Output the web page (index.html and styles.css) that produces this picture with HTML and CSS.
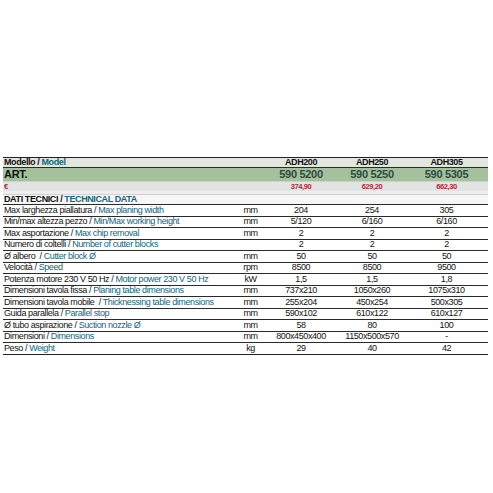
FILE: index.html
```html
<!DOCTYPE html>
<html lang="it">
	<head>
		<meta charset="UTF-8" />
		<meta name="viewport" content="width=device-width, initial-scale=1.0" />
		<title>Pialla ADH - Dati tecnici</title>
		<link rel="stylesheet" href="styles.css">
	</head>
	<body>
		<div class="sheet">
			<table class="specs">
				<colgroup>
					<col class="c-label">
					<col class="c-unit">
					<col class="c-m1">
					<col class="c-m2">
					<col class="c-m3">
				</colgroup>
				<tr class="model">
					<td>Modello / <span class="en">Model</span></td>
					<td></td>
					<td>ADH200</td>
					<td>ADH250</td>
					<td>ADH305</td>
				</tr>
				<tr class="art">
					<td>ART.</td>
					<td></td>
					<td>590 5200</td>
					<td>590 5250</td>
					<td>590 5305</td>
				</tr>
				<tr class="price">
					<td>€</td>
					<td></td>
					<td>374,90</td>
					<td>629,20</td>
					<td>662,30</td>
				</tr>
				<tr class="spacer"><td colspan="5"></td></tr>
				<tr class="section">
					<td colspan="5">DATI TECNICI / <span class="en">TECHNICAL DATA</span></td>
				</tr>
				<tr>
					<td>Max larghezza piallatura / <span class="en">Max planing width</span></td>
					<td>mm</td><td>204</td><td>254</td><td>305</td>
				</tr>
				<tr>
					<td>Min/max altezza pezzo / <span class="en">Min/Max working height</span></td>
					<td>mm</td><td>5/120</td><td>6/160</td><td>6/160</td>
				</tr>
				<tr>
					<td>Max asportazione / <span class="en">Max chip removal</span></td>
					<td>mm</td><td>2</td><td>2</td><td>2</td>
				</tr>
				<tr>
					<td>Numero di coltelli / <span class="en">Number of cutter blocks</span></td>
					<td></td><td>2</td><td>2</td><td>2</td>
				</tr>
				<tr>
					<td>Ø albero &nbsp;/ <span class="en">Cutter block Ø</span></td>
					<td>mm</td><td>50</td><td>50</td><td>50</td>
				</tr>
				<tr>
					<td>Velocità / <span class="en">Speed</span></td>
					<td>rpm</td><td>8500</td><td>8500</td><td>9500</td>
				</tr>
				<tr>
					<td>Potenza motore 230 V 50 Hz / <span class="en">Motor power 230 V 50 Hz</span></td>
					<td>kW</td><td>1,5</td><td>1,5</td><td>1,8</td>
				</tr>
				<tr>
					<td>Dimensioni tavola fissa / <span class="en">Planing table dimensions</span></td>
					<td>mm</td><td>737x210</td><td>1050x260</td><td>1075x310</td>
				</tr>
				<tr>
					<td>Dimensioni tavola mobile &nbsp;/ <span class="en">Thicknessing table dimensions</span></td>
					<td>mm</td><td>255x204</td><td>450x254</td><td>500x305</td>
				</tr>
				<tr>
					<td>Guida parallela / <span class="en">Parallel stop</span></td>
					<td>mm</td><td>590x102</td><td>610x122</td><td>610x127</td>
				</tr>
				<tr>
					<td>Ø tubo aspirazione / <span class="en">Suction nozzle Ø</span></td>
					<td>mm</td><td>58</td><td>80</td><td>100</td>
				</tr>
				<tr>
					<td>Dimensioni / <span class="en">Dimensions</span></td>
					<td>mm</td><td>800x450x400</td><td>1150x500x570</td><td>-</td>
				</tr>
				<tr class="last">
					<td>Peso / <span class="en">Weight</span></td>
					<td>kg</td><td>29</td><td>40</td><td>42</td>
				</tr>
			</table>
		</div>
	</body>
</html>
```

FILE: styles.css
```css
* {
	margin: 0;
	padding: 0;
	box-sizing: border-box;
}
body {
	background-color: #fff;
	color: #111;
	font-family: "Liberation Sans", Arial, sans-serif;
}
.sheet {
	padding: 157px 5px 0 3px;
}
.specs {
	width: 485px;
	table-layout: fixed;
	border-collapse: collapse;
	font-size: 9px;
	letter-spacing: -0.4px;
	border-top: 1.5px solid #222;

	.c-label {
		width: 235px;
	}
	.c-unit {
		width: 24px;
	}
	.c-m1 {
		width: 77px;
	}
	.c-m2 {
		width: 65px;
	}
	.c-m3 {
		width: 84px;
	}
	td {
		height: 11.5px;
		padding: 0 0 0 1px;
		line-height: 1;
		white-space: nowrap;
		text-align: center;
		border-bottom: 1px solid #2a2a2a;
	}
	td:first-child {
		text-align: left;
	}
	.en {
		color: #16637a;
	}
	.model td {
		height: 9px;
		font-weight: bold;
		background-color: #e1e6de;
	}
	.art td {
		height: 14px;
		font-size: 11px;
		font-weight: bold;
		letter-spacing: -0.3px;
		color: #2d4a40;
		background-color: #a5c09d;
		border-bottom: 1px solid #c9d4c6;
	}
	.art td:first-child {
		color: #111;
	}
	.price td {
		height: 9px;
		font-size: 7.5px;
		font-weight: bold;
		color: #a52c3a;
		background-color: #e3e3e3;
		border-bottom: none;
	}
	.spacer td {
		height: 4px;
		background-color: #eeeeee;
		border-bottom: 1px solid #d0d0d0;
	}
	.section td {
		height: 9px;
		font-weight: bold;
		background-color: #f6f6f6;
	}
	.last td {
		border-bottom: 1.5px solid #222;
	}
}
```
